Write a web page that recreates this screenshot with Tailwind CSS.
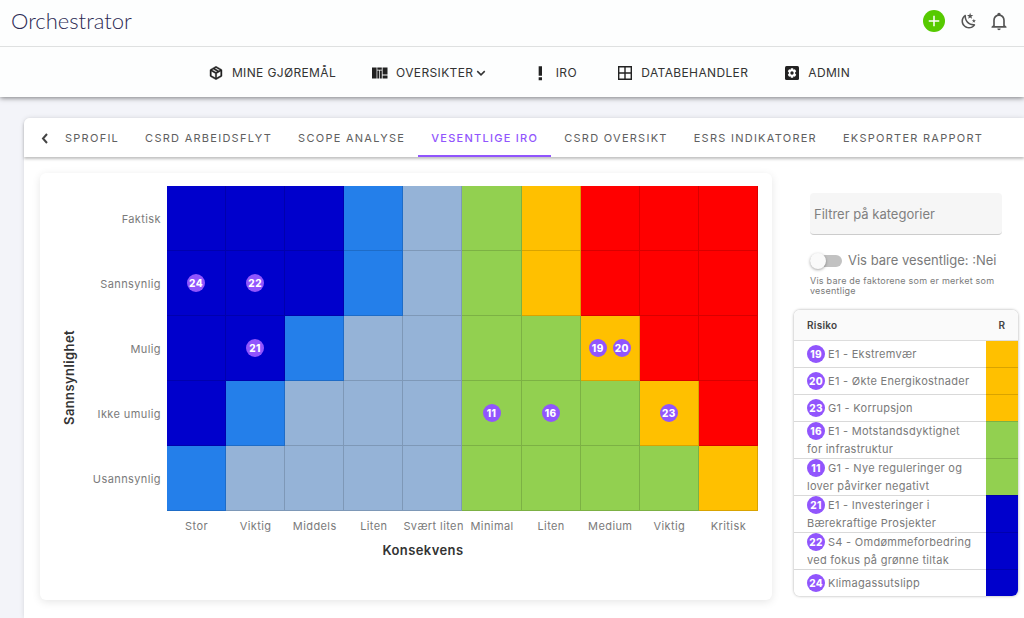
<!DOCTYPE html>
<html lang="no">
<head>
<meta charset="utf-8">
<meta name="viewport" content="width=device-width, initial-scale=1">
<title>Orchestrator</title>
<script src="https://cdn.jsdelivr.net/npm/@tailwindcss/browser@4"></script>
</head>
<body class="flex h-screen flex-col overflow-hidden bg-[#f3f4f9] font-['Inter',sans-serif] text-[#7a7a7a]">
<header class="relative z-10 bg-[#fdfefe] shadow-[0_1px_5px_rgba(0,0,0,0.5)]">
  <div class="flex h-[47px] items-center justify-between border-b border-[#dfe1e1] pr-[15px] pb-[5px] pl-[11px]">
    <a href="#" class="font-['Lato',sans-serif] text-[22px] leading-8 font-light text-[#2c2a54]">Orchestrator</a>
    <div class="flex items-center gap-[15px]">
      <button type="button" aria-label="Legg til" class="flex size-[22px] items-center justify-center rounded-full bg-[#56ca00]">
        <svg class="size-[18px] fill-white" viewBox="0 0 24 24"><path d="M19 13h-6v6h-2v-6H5v-2h6V5h2v6h6v2Z"/></svg>
      </button>
      <button type="button" aria-label="Mørk modus">
        <svg class="size-[18px] fill-[#555]" viewBox="0 0 24 24"><path d="M17.75 4.09L15.22 6.03L16.13 9.09L13.5 7.28L10.87 9.09L11.78 6.03L9.25 4.09L12.44 4L13.5 1L14.56 4L17.75 4.09M21.25 11L19.61 12.25L20.2 14.23L18.5 13.06L16.8 14.23L17.39 12.25L15.75 11L17.81 10.95L18.5 9L19.19 10.95L21.25 11M18.97 15.95C19.8 15.87 20.69 17.05 20.16 17.8C19.84 18.25 19.5 18.67 19.08 19.07C15.17 23 8.84 23 4.94 19.07C1.03 15.17 1.03 8.83 4.94 4.93C5.34 4.53 5.76 4.17 6.21 3.85C6.96 3.32 8.14 4.21 8.06 5.04C7.79 7.9 8.75 10.87 10.95 13.06C13.14 15.26 16.1 16.22 18.97 15.95M17.33 17.97C14.5 17.81 11.7 16.64 9.53 14.5C7.36 12.31 6.2 9.5 6.04 6.68C3.23 9.82 3.34 14.64 6.35 17.66C9.37 20.67 14.19 20.78 17.33 17.97Z"/></svg>
      </button>
      <button type="button" aria-label="Varsler" class="-ml-1">
        <svg class="size-5 fill-[#555]" viewBox="0 0 24 24"><path d="M10 21H14C14 22.1 13.1 23 12 23S10 22.1 10 21M21 19V20H3V19L5 17V11C5 7.9 7.03 5.17 10 4.29C10 4.19 10 4.1 10 4C10 2.9 10.9 2 12 2S14 2.9 14 4C14 4.1 14 4.19 14 4.29C16.97 5.17 19 7.9 19 11V17L21 19M17 11C17 8.24 14.76 6 12 6S7 8.24 7 11V18H17V11Z"/></svg>
      </button>
    </div>
  </div>
  <nav class="flex h-[50px] items-center justify-center pt-px pl-[34px] text-xs tracking-[0.03em] text-[#333]">
    <a href="#" class="flex items-center gap-2 px-[18px]">
      <svg class="size-4 fill-[#222]" viewBox="0 0 24 24"><path d="M21 16.5C21 16.88 20.79 17.21 20.47 17.38L12.57 21.82C12.41 21.94 12.21 22 12 22S11.59 21.94 11.43 21.82L3.53 17.38C3.21 17.21 3 16.88 3 16.5V7.5C3 7.12 3.21 6.79 3.53 6.62L11.43 2.18C11.59 2.06 11.79 2 12 2S12.41 2.06 12.57 2.18L20.47 6.62C20.79 6.79 21 7.12 21 7.5V16.5M12 4.15L10.11 5.22L16 8.61L17.96 7.5L12 4.15M6.04 7.5L12 10.85L13.96 9.75L8.08 6.35L6.04 7.5M5 15.91L11 19.29V12.58L5 9.21V15.91M19 15.91V9.21L13 12.58V19.29L19 15.91Z" stroke="#222" stroke-width=".6"/></svg>
      MINE GJØREMÅL</a>
    <a href="#" class="flex items-center gap-2 px-[18px]">
      <svg class="size-4 fill-[#222]" viewBox="0 0 16 16"><path d="M0 2.500H4.600V13.500H0ZM5.300 2.500H9.800V4.800H5.300ZM5.300 5.600H7.200V13.500H5.300ZM7.900 5.600H9.800V13.500H7.900ZM10.600 2.500H15.500V9.600H10.600ZM10.600 10.500H15.500V13.500H10.600Z"/></svg>
      <span class="flex items-center gap-[2px]">OVERSIKTER
      <svg class="size-3 fill-none stroke-[#333] stroke-2" viewBox="0 0 16 16"><path d="M3 5.500L8 10.500L13 5.500"/></svg></span></a>
    <a href="#" class="flex min-w-[94px] items-center justify-center gap-2 pl-1">
      <svg class="size-4 fill-[#222]" viewBox="0 0 24 24"><path d="M10 2h5v14h-5zM10 18.500h5V23h-5z"/></svg>
      IRO</a>
    <a href="#" class="flex items-center gap-2 px-[18px]">
      <svg class="size-4 fill-none stroke-[#222]" viewBox="0 0 16 16" stroke-width="1.400"><path d="M1.700 1.700H14.300V14.300H1.700ZM8 1.700V14.300M1.700 8H14.300"/></svg>
      DATABEHANDLER</a>
    <a href="#" class="flex items-center gap-2 px-[18px]">
      <svg class="size-4" viewBox="0 0 16 16"><rect x="1" y="1" width="14" height="14" rx="1.500" fill="#222"/><path d="M6.900 3.300h2.200l.4 1.500 1.400-.5 1.300 2-1.100 1.100v1.200l1.100 1.100-1.300 2-1.400-.5-.4 1.500H6.900l-.4-1.500-1.400.5-1.300-2 1.100-1.100V7.400L3.800 6.300l1.300-2 1.400.5Z" fill="#fff"/><circle cx="8" cy="8" r="1.700" fill="#222"/></svg>
      ADMIN</a>
  </nav>
</header>

<main class="mt-[21px] ml-6 flex flex-1 flex-col rounded-tl-md bg-white shadow-[0_0_5px_rgba(0,0,0,0.12)]">
  <div class="flex h-[39px] rounded-tl-md bg-white pl-3 text-[11px] tracking-[0.115em] text-[#606060] shadow-[0_2px_3px_rgba(0,0,0,0.25)]">
    <button type="button" aria-label="Forrige faner" class="w-4 pl-px">
      <svg class="size-4 fill-none stroke-[#444] stroke-2" viewBox="0 0 16 16"><path d="M10 4L6 8.500L10 13"/></svg>
    </button>
    <div role="tablist" class="flex whitespace-nowrap">
      <button role="tab" type="button" class="px-[13px] pt-px">SPROFIL</button>
      <button role="tab" type="button" class="px-[13px] pt-px">CSRD ARBEIDSFLYT</button>
      <button role="tab" type="button" class="px-[13px] pt-px">SCOPE ANALYSE</button>
      <button role="tab" type="button" aria-selected="true" class="border-b-2 border-[#9155fd] px-[13px] pt-[3px] font-medium text-[#9155fd]">VESENTLIGE IRO</button>
      <button role="tab" type="button" class="px-[13px] pt-px">CSRD OVERSIKT</button>
      <button role="tab" type="button" class="px-[13px] pt-px">ESRS INDIKATORER</button>
      <button role="tab" type="button" class="px-[13px] pt-px">EKSPORTER RAPPORT</button>
    </div>
  </div>

  <div class="flex items-start pt-4 pr-[6px] pl-4">
    <section class="flex min-w-0 flex-1 rounded-md bg-white pt-[13px] pr-[14px] pb-7 pl-5 tracking-wide shadow-[0_2px_8px_rgba(0,0,0,0.1)]">
      <div class="flex w-5 items-center justify-center pb-1">
        <h2 class="rotate-180 text-[13px] font-semibold text-[#333] [writing-mode:vertical-rl]">Sannsynlighet</h2>
      </div>
      <div class="min-w-0 flex-1">
        <div id="matrix" class="grid auto-rows-[65px] grid-cols-[87px_repeat(10,minmax(0,1fr))] text-[11px]"></div>
        <div class="grid grid-cols-[87px_repeat(10,minmax(0,1fr))] pt-[5px] text-center text-[11px] leading-5 whitespace-nowrap">
          <span></span><span>Stor</span><span>Viktig</span><span>Middels</span><span>Liten</span><span>Svært liten</span><span>Minimal</span><span>Liten</span><span>Medium</span><span>Viktig</span><span>Kritisk</span>
        </div>
        <h2 class="mt-1 pb-3 pl-2 text-center text-[13px] leading-5 font-semibold text-[#333]">Konsekvens</h2>
      </div>
    </section>

    <aside class="ml-[22px] w-56 pt-5">
      <div class="px-4">
        <input type="text" aria-label="Filtrer på kategorier" placeholder="Filtrer på kategorier" class="block h-[42px] w-full rounded border-b border-[#ccc] bg-[#f6f6f6] px-1 text-[13px] placeholder:text-[#808080]">
        <label class="mt-4 flex h-5 items-center gap-[6px] text-[13px] whitespace-nowrap">
          <input type="checkbox" role="switch" class="relative h-3 w-8 appearance-none rounded-full bg-[#c2c2c2] before:absolute before:-top-[2px] before:left-0 before:size-4 before:rounded-full before:bg-[#fafafa] before:shadow-[0_1px_3px_rgba(0,0,0,0.35)] checked:before:left-4">
          Vis bare vesentlige: :Nei
        </label>
        <p class="mt-[5px] text-[9px] leading-[10px] tracking-wide">Vis bare de faktorene som er merket som vesentlige</p>
      </div>
      <div class="mt-[14px] overflow-hidden rounded-md shadow-[0_0_3px_rgba(0,0,0,0.35)]">
        <table class="w-full bg-white text-[11px] leading-[18px] tracking-wide">
          <thead class="bg-[#fafafa] text-[10px] text-[#444]">
            <tr class="h-[30px] border-b border-[#ddd]"><th class="pl-[13px] text-left font-semibold">Risiko</th><th class="w-8 font-semibold">R</th></tr>
          </thead>
          <tbody id="risks"></tbody>
        </table>
      </div>
    </aside>
  </div>
</main>

<script>
const colors = { D: 'bg-[#0000cc]', B: 'bg-[#247fea]', L: 'bg-[#95b3d7]', G: 'bg-[#92d050]', Y: 'bg-[#ffc000]', R: 'bg-[#ff0000]' };
const badge = n => `<span class="inline-flex size-[18px] items-center justify-center rounded-full bg-[#9155fd] align-top text-[10px] leading-none font-extrabold text-white">${n}</span>`;

const rows = [
  ['Faktisk', 'DDDBLGYRRR', {}],
  ['Sannsynlig', 'DDDBLGYRRR', { 0: [24], 1: [22] }],
  ['Mulig', 'DDBLLGGYRR', { 1: [21], 7: [19, 20] }],
  ['Ikke umulig', 'DBLLLGGGYR', { 5: [11], 6: [16], 8: [23] }],
  ['Usannsynlig', 'BLLLLGGGGY', {}],
];
document.getElementById('matrix').innerHTML = rows.map(([label, cells, marks]) =>
  `<span class="flex items-center justify-end pt-px pr-[6px]">${label}</span>` +
  [...cells].map((c, i) => `<div class="flex items-center justify-center gap-[6px] border-r border-b border-black/15 ${colors[c]}">${(marks[i] || []).map(badge).join('')}</div>`).join('')
).join('');

const risks = [
  [19, 'E1 - Ekstremvær', 'Y'],
  [20, 'E1 - Økte Energikostnader', 'Y'],
  [23, 'G1 - Korrupsjon', 'Y'],
  [16, 'E1 - Motstandsdyktighet for infrastruktur', 'G'],
  [11, 'G1 - Nye reguleringer og lover påvirker negativt', 'G'],
  [21, 'E1 - Investeringer i Bærekraftige Prosjekter', 'D'],
  [22, 'S4 - Omdømmeforbedring ved fokus på grønne tiltak', 'D'],
  [24, 'Klimagassutslipp', 'D'],
];
document.getElementById('risks').innerHTML = risks.map(([n, text, c]) =>
  `<tr class="h-[27px] border-b border-black/15 last:border-b-0"><td class="pr-3 pl-[13px]"><span class="mr-[3px]">${badge(n)}</span>${text}</td><td class="${colors[c]}"></td></tr>`
).join('');
</script>
</body>
</html>
